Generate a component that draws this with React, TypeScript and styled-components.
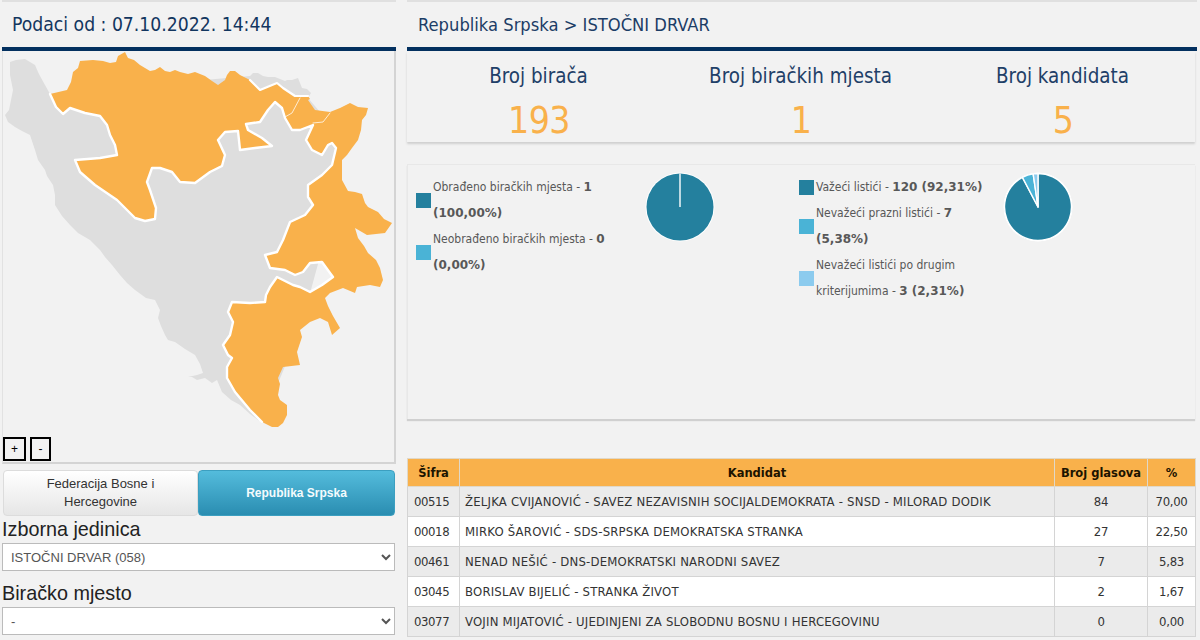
import React from "react";
import styled, { createGlobalStyle } from "styled-components";

const Global = createGlobalStyle`
  html, body { margin: 0; padding: 0; background: #f2f2f2; }
  body { font-family: "DejaVu Sans Condensed", "DejaVu Sans", sans-serif; width: 1200px; height: 640px; overflow: hidden; }
`;
const Page = styled.div`
  display: grid;
  grid-template-columns: 394px 790px;
  column-gap: 11px;
  padding-left: 2px;
  height: 640px;
`;
const LeftCol = styled.div`display: flex; flex-direction: column;`;
const RightCol = styled.div`display: flex; flex-direction: column;`;
const Header = styled.div`
  height: 45px;
  box-sizing: content-box;
  border-top: 2px solid #e0e0e0;
  border-bottom: 4px solid #03305f;
  display: flex;
  align-items: center;
  color: #1c3d66;
`;
const Title = styled.h1`
  margin: 0 0 0 10px;
  font-size: 19.2px;
  font-weight: 400;
  color: #12365f;
`;
const Crumb = styled.h2`
  margin: 0 0 0 11px;
  font-size: 18.2px;
  font-weight: 400;
  color: #1c3d66;
`;
const MapPanel = styled.div`
  position: relative;
  height: 411px;
  border-right: 2px solid #d4d4d4;
  border-bottom: 2px solid #d4d4d4;
  border-left: 1px solid #e2e2e2;
  svg { display: block; }
`;
const ZoomRow = styled.div`
  position: absolute;
  left: 0;
  bottom: 1px;
  display: flex;
  gap: 4px;
`;
const ZoomButton = styled.button<{ $w: number }>`
  width: ${p => p.$w}px;
  height: 24px;
  padding: 0;
  border: 2px solid #000;
  background: #f2f2f2;
  font: 12px "Liberation Sans", sans-serif;
  color: #000;
`;
const Tabs = styled.div`
  display: grid;
  grid-template-columns: 195px 197px;
  margin: 6px 0 0 1px;
  height: 46px;
`;
const Tab = styled.div<{ $on?: boolean }>`
  display: flex;
  align-items: center;
  justify-content: center;
  text-align: center;
  box-sizing: border-box;
  padding: 0 24px;
  font: ${p => (p.$on ? "700 12px" : "400 13px")}/18px "Liberation Sans", sans-serif;
  border-radius: 4px;
  color: ${p => (p.$on ? "#f4fbfd" : "#333")};
  background: ${p => (p.$on ? "linear-gradient(#54bcdc, #2a8db1)" : "linear-gradient(#ffffff, #e6e6e6)")};
  border: 1px solid ${p => (p.$on ? "#3c9fc0" : "#dcdcdc")};
`;
const Field = styled.label`display: block; margin-top: 0;`;
const FieldName = styled.div`
  font: 19.8px/26px "Liberation Sans", sans-serif;
  color: #222;
  height: 27px;
`;
const Choice = styled.select`
  display: block;
  width: 393px;
  height: 28px;
  box-sizing: border-box;
  background: #fff;
  border: 1px solid #bbb;
  border-radius: 0;
  padding: 0 4px;
  font: 13px "Liberation Sans", sans-serif;
  color: #555;
`;
const SecondField = styled(Field)`margin-top: 9px;`;
const Stats = styled.div`
  display: grid;
  grid-template-columns: repeat(3, 262px);
  height: 91px;
  box-shadow: 0 2px 2px #cfcfcf;
  margin-right: 2px;
`;
const Stat = styled.div`text-align: center;`;
const StatName = styled.div`
  font-size: 20.4px;
  line-height: 24px;
  margin-top: 13px;
  padding-left: 1px;
  color: #1f4068;
`;
const StatValue = styled.div`
  font-size: 37px;
  line-height: 44px;
  margin-top: 11px;
  padding-left: 2px;
  letter-spacing: -0.5px;
  color: #f9b14b;
`;
const ChartPanel = styled.div`
  margin: 22px 2px 0 0;
  height: 255px;
  border-top: 1px solid #e8e8e8;
  border-left: 1px solid #e8e8e8;
  box-shadow: 0 2px 1px #d0d0d0;
  display: grid;
  grid-template-columns: 383px 398px;
  padding-top: 9px;
  box-sizing: border-box;
`;
const ChartBlock = styled.div`
  display: flex;
  align-items: flex-start;
  padding-left: 8px;
`;
const Legend = styled.div<{ $w: number }>`width: ${p => p.$w}px; flex: none;`;
const LegendItem = styled.div`
  display: flex;
  align-items: center;
  gap: 2px;
  font-size: 12px;
  line-height: 26px;
  color: #585858;
  b { font-weight: 700; font-family: "DejaVu Sans", sans-serif; font-size: 12px; }
`;
const Swatch = styled.span<{ $c: string }>`
  flex: none;
  width: 15px;
  height: 15px;
  background: ${p => p.$c};
`;
const Table = styled.table`
  margin: 39px 0 0 0;
  width: 789px;
  border-collapse: collapse;
  table-layout: fixed;
  font-size: 13px;
  letter-spacing: 0.2px;
  color: #333;
  border: 1px solid #ccc;
`;
const Th = styled.th`
  background: #f9b14b;
  height: 27px;
  padding: 0;
  border: 1px solid #e0d8c8;
  color: #1c1400;
  font-family: "DejaVu Sans", sans-serif;
  font-size: 11.5px;
  letter-spacing: 0;
`;
const Row = styled.tr<{ $odd: boolean }>`
  background: ${p => (p.$odd ? "#ebebeb" : "#fff")};
`;
const Td = styled.td`
  height: 29px;
  padding: 0 5px;
  border: 1px solid #d4d4d4;
  text-align: left;
  white-space: nowrap;
`;
const CodeTd = styled(Td)`
  padding-left: 6px;
  letter-spacing: -0.4px;
`;
const NumTd = styled(Td)`
  padding: 0;
  text-align: center;
  letter-spacing: -0.3px;
`;

const gray = "M10,62 L16,60 L25,59 L30,62 L35,65 L38,72 L40,76 L45,85 L50,94 L90,90 L250,76 L253,73 L258,73 L263,76 L268,77 L275,77 L285,81 L287,80 L292,80 L298,78 L300,83 L302,88 L307,89 L311,93 L308,98 L320,112 L340,150 L330,220 L300,330 L262,422 L258,420 L250,414 L240,405 L231,400 L222,392 L217,380 L212,383 L205,378 L197,380 L192,377 L188,377 L197,375 L203,373 L200,364 L195,355 L185,349 L175,342 L168,340 L165,335 L161,326 L158,318 L160,310 L155,300 L146,298 L135,290 L127,283 L120,275 L112,265 L105,257 L100,250 L90,240 L78,233 L70,225 L62,216 L55,205 L55,195 L53,185 L47,176 L45,170 L38,160 L35,150 L30,135 L22,131 L15,127 L8,122 L5,115 L9,110 L13,90 L10,75 Z";

const orange = "M50,94 L67,90 L71,82 L73,72 L78,68 L80,61 L93,60 L103,61 L110,63 L116,62 L118,56 L125,52 L128,58 L134,60 L140,65 L150,71 L155,70 L160,67 L165,71 L170,72 L175,70 L180,72 L188,74 L195,72 L205,76 L212,81 L218,85 L225,80 L227,75 L230,71 L235,71 L240,75 L250,80 L260,90 L277,83 L283,88 L295,96 L308,96 L310,99 L308,100 L315,110 L330,112 L340,108 L350,103 L358,107 L368,108 L366,115 L362,120 L361,130 L358,140 L352,148 L347,155 L342,160 L342,170 L342,180 L348,191 L355,192 L362,194 L365,203 L368,207 L378,212 L384,219 L392,223 L385,233 L367,235 L355,228 L358,238 L364,246 L368,253 L376,260 L380,268 L383,280 L380,287 L370,285 L357,287 L355,293 L343,288 L330,293 L325,298 L328,306 L333,316 L340,328 L332,335 L328,322 L320,318 L310,322 L300,330 L302,337 L297,352 L300,365 L283,367 L278,378 L280,384 L278,395 L280,400 L287,405 L287,415 L283,423 L278,427 L272,427 L262,422 L250,410 L235,392 L227,378 L227,367 L232,358 L228,355 L223,345 L230,335 L233,322 L228,312 L232,302 L250,303 L265,302 L266,295 L270,287 L277,277 L283,280 L293,285 L300,287 L310,292 L322,285 L333,277 L330,273 L322,262 L310,263 L303,272 L295,275 L285,270 L270,268 L265,255 L277,252 L283,240 L290,222 L305,215 L313,205 L308,197 L308,185 L322,175 L332,165 L336,148 L332,143 L328,145 L322,155 L312,150 L306,140 L313,125 L300,130 L292,130 L285,118 L282,108 L275,102 L268,110 L260,122 L246,124 L248,130 L262,138 L272,146 L255,148 L240,150 L238,131 L225,132 L218,140 L225,155 L222,166 L210,172 L195,183 L180,182 L172,172 L160,168 L152,168 L147,182 L150,190 L156,208 L155,219 L145,221 L135,218 L117,200 L95,185 L80,172 L75,160 L100,158 L117,155 L115,145 L110,135 L107,125 L100,116 L85,113 L70,108 L63,114 L56,107 Z";

const borderA = "M50,94 L56,107 L63,114 L70,108 L85,113 L100,116 L107,125 L110,135 L115,145 L117,155 L100,158 L75,160 L80,172 L95,185 L117,200 L135,218 L145,221 L155,219 L156,208 L150,190 L147,182 L152,168 L160,168 L172,172 L180,182 L195,183 L210,172 L222,166 L225,155 L218,140 L225,132 L238,131 L240,150 L255,148 L272,146 L262,138 L248,130 L246,124 L260,122 L268,110 L275,102 L282,108 L285,118 L292,130 L300,130 L313,125 L306,140 L312,150 L322,155 L328,145 L332,143 L336,148 L332,165 L322,175 L308,185 L308,197 L313,205 L305,215 L290,222 L283,240 L277,252 L265,255 L270,268 L285,270 L295,275 L303,272 L310,263 L322,262 L330,273 L333,277 L322,285 L310,292 L300,287 L293,285 L283,280 L277,277 L270,287 L266,295 L265,302 L250,303 L232,302 L228,312 L233,322 L230,335 L223,345 L228,355 L232,358 L227,367 L227,378 L235,392 L250,410 L262,422";
const borderTop = "M250,80 L260,90 L277,83 L283,88 L295,96 L308,96";
const thin = "M285,117 L292,113 L300,98 M313,123 L323,122 L330,113";

const BosniaMap = () => (
  <svg width="391" height="411" viewBox="3 51 391 411" aria-hidden="true">
    <path d={gray} fill="#dedede" />
    <path d={orange} fill="#f9b14b" />
    <g fill="none" stroke="#fff" strokeLinejoin="round" strokeLinecap="round">
      <path d={borderA} strokeWidth="2.4" />
      <path d={borderTop} strokeWidth="2.2" />
      <path d={thin} strokeWidth="1" opacity=".75" />
    </g>
  </svg>
);

type Slice = { v: number; c: string };
const Pie = ({ slices, left, top }: { slices: Slice[]; left: number; top: number }) => {
  const r = 33.5, cx = 35, cy = 35;
  const pt = (f: number) => [cx + r * Math.sin(2 * Math.PI * f), cy - r * Math.cos(2 * Math.PI * f)];
  let acc = 0;
  return (
    <svg width="70" height="70" style={{ marginLeft: left, marginTop: top, flex: "none" }} aria-hidden="true">
      <circle cx={cx} cy={cy} r={34.5} fill="#fff" />
      {slices.map((s, i) => {
        const [x1, y1] = pt(acc);
        const end = acc + s.v;
        const [x2, y2] = pt(end);
        acc = end;
        if (s.v >= 0.9999) {
          return (
            <g key={i}>
              <circle cx={cx} cy={cy} r={r} fill={s.c} />
              <line x1={cx} y1={cy} x2={cx} y2={cy - r} stroke="#fff" strokeWidth="1.4" />
            </g>
          );
        }
        return (
          <path
            key={i}
            d={`M${cx},${cy} L${x1},${y1} A${r},${r} 0 ${s.v > 0.5 ? 1 : 0} 1 ${x2},${y2} Z`}
            fill={s.c}
            stroke="#fff"
            strokeWidth="1.4"
            strokeLinejoin="round"
          />
        );
      })}
    </svg>
  );
};

const rows = [
  ["00515", "ŽELJKA CVIJANOVIĆ - SAVEZ NEZAVISNIH SOCIJALDEMOKRATA - SNSD - MILORAD DODIK", "84", "70,00"],
  ["00018", "MIRKO ŠAROVIĆ - SDS-SRPSKA DEMOKRATSKA STRANKA", "27", "22,50"],
  ["00461", "NENAD NEŠIĆ - DNS-DEMOKRATSKI NARODNI SAVEZ", "7", "5,83"],
  ["03045", "BORISLAV BIJELIĆ - STRANKA ŽIVOT", "2", "1,67"],
  ["03077", "VOJIN MIJATOVIĆ - UJEDINJENI ZA SLOBODNU BOSNU I HERCEGOVINU", "0", "0,00"],
];

export default function App() {
  return (
    <>
      <Global />
      <Page>
        <LeftCol>
          <Header><Title>Podaci od : 07.10.2022. 14:44</Title></Header>
          <MapPanel>
            <BosniaMap />
            <ZoomRow>
              <ZoomButton $w={23}>+</ZoomButton>
              <ZoomButton $w={21}>-</ZoomButton>
            </ZoomRow>
          </MapPanel>
          <Tabs>
            <Tab>Federacija Bosne i Hercegovine</Tab>
            <Tab $on>Republika Srpska</Tab>
          </Tabs>
          <Field>
            <FieldName>Izborna jedinica</FieldName>
            <Choice defaultValue="a"><option value="a">ISTOČNI DRVAR (058)</option></Choice>
          </Field>
          <SecondField>
            <FieldName>Biračko mjesto</FieldName>
            <Choice defaultValue="a"><option value="a">-</option></Choice>
          </SecondField>
        </LeftCol>
        <RightCol>
          <Header><Crumb>Republika Srpska &gt; ISTOČNI DRVAR</Crumb></Header>
          <Stats>
            <Stat><StatName>Broj birača</StatName><StatValue>193</StatValue></Stat>
            <Stat><StatName>Broj biračkih mjesta</StatName><StatValue>1</StatValue></Stat>
            <Stat><StatName>Broj kandidata</StatName><StatValue>5</StatValue></Stat>
          </Stats>
          <ChartPanel>
            <ChartBlock>
              <Legend $w={222}>
                <LegendItem>
                  <Swatch $c="#24809e" />
                  <span>Obrađeno biračkih mjesta - <b>1</b><br /><b>(100,00%)</b></span>
                </LegendItem>
                <LegendItem>
                  <Swatch $c="#4ab3d6" />
                  <span>Neobrađeno biračkih mjesta - <b>0</b><br /><b>(0,00%)</b></span>
                </LegendItem>
              </Legend>
              <Pie slices={[{ v: 1, c: "#24809e" }]} left={7} top={-2} />
            </ChartBlock>
            <ChartBlock>
              <Legend $w={198}>
                <LegendItem>
                  <Swatch $c="#24809e" />
                  <span>Važeći listići - <b>120 (92,31%)</b></span>
                </LegendItem>
                <LegendItem>
                  <Swatch $c="#4ab3d6" />
                  <span>Nevažeći prazni listići - <b>7</b><br /><b>(5,38%)</b></span>
                </LegendItem>
                <LegendItem>
                  <Swatch $c="#8ccbee" />
                  <span>Nevažeći listići po drugim<br />kriterijumima - <b>3 (2,31%)</b></span>
                </LegendItem>
              </Legend>
              <Pie
                slices={[
                  { v: 0.9231, c: "#24809e" },
                  { v: 0.0538, c: "#4ab3d6" },
                  { v: 0.0231, c: "#8ccbee" },
                ]}
                left={6}
                top={-2}
              />
            </ChartBlock>
          </ChartPanel>
          <Table>
            <colgroup>
              <col style={{ width: 52 }} /><col /><col style={{ width: 93 }} /><col style={{ width: 48 }} />
            </colgroup>
            <thead>
              <tr><Th>Šifra</Th><Th>Kandidat</Th><Th>Broj glasova</Th><Th>%</Th></tr>
            </thead>
            <tbody>
              {rows.map((r, i) => (
                <Row key={r[0]} $odd={i % 2 === 0}>
                  <CodeTd>{r[0]}</CodeTd><Td>{r[1]}</Td><NumTd>{r[2]}</NumTd><NumTd>{r[3]}</NumTd>
                </Row>
              ))}
            </tbody>
          </Table>
        </RightCol>
      </Page>
    </>
  );
}
